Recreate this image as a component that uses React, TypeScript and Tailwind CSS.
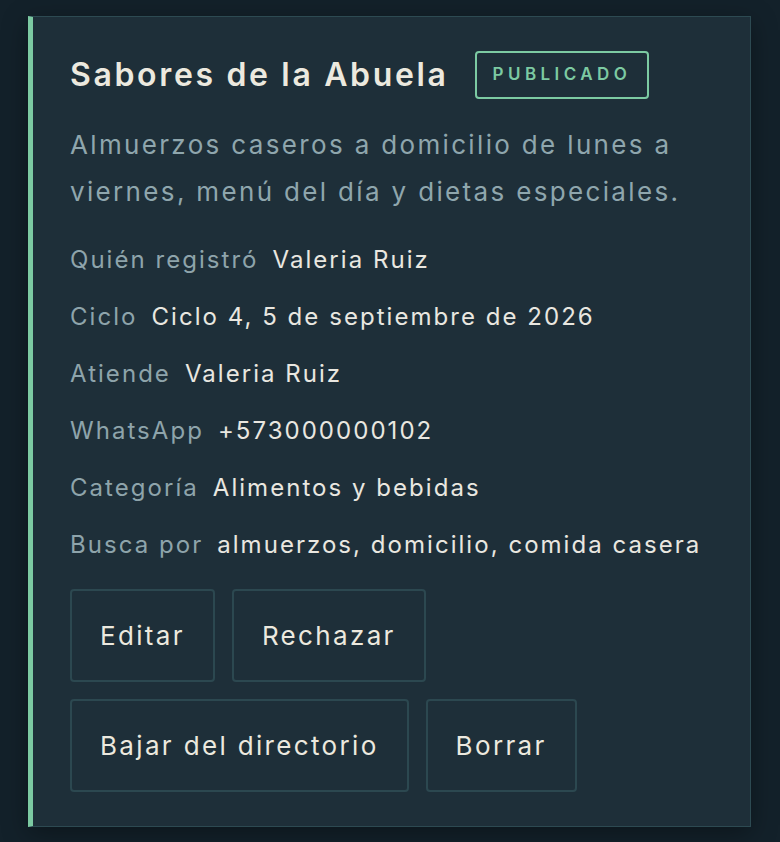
import React from 'react';

const rows: [string, string][] = [
    ['Quién registró', 'Valeria Ruiz'],
    ['Ciclo', 'Ciclo 4, 5 de septiembre de 2026'],
    ['Atiende', 'Valeria Ruiz'],
    ['WhatsApp', '+573000000102'],
    ['Categoría', 'Alimentos y bebidas'],
    ['Busca por', 'almuerzos, domicilio, comida casera'],
];

const actions = ['Editar', 'Rechazar', 'Bajar del directorio', 'Borrar'];

export default function App() {
    return (
        <div
            className="min-h-[842px] w-full bg-[#13212a] pt-[16px] pl-[28px] pr-[29px] pb-[16px]"
            style={{ fontFamily: 'Inter, "Noto Sans", sans-serif' }}
        >
            <div className="border border-[#2d4a52] border-l-[5px] border-l-[#7ccaa2] bg-[#1e2f39] pt-[34px] pl-[37px] pr-[36px] pb-[34px] shadow-[0_6px_24px_rgba(0,0,0,0.35)]">
                {/* Header */}
                <div className="flex items-center gap-[26px]">
                    <h1 className="text-[32px] font-semibold tracking-[0.083em] text-[#ece9df] leading-none">
                        Sabores de la Abuela
                    </h1>
                    <span className="flex h-[48px] items-center rounded-[4px] border-2 border-[#7ccaa2] px-[16px] text-[17px] font-semibold tracking-[0.26em] text-[#7ccaa2]">
                        PUBLICADO
                    </span>
                </div>

                <p className="mt-[22px] text-[26px] leading-[47px] tracking-[0.09em] text-[#8fa6ad]">
                    Almuerzos caseros a domicilio de lunes a viernes, menú del día y dietas especiales.
                </p>

                <div className="mt-[16px] flex flex-col">
                    {rows.map(([label, value]) => (
                        <div key={label} className="flex h-[57px] items-center gap-[14px] text-[24px] tracking-[0.085em]">
                            <span className="text-[#8ea4ab]">{label}</span>
                            <span className="text-[#e9e7e0]">{value}</span>
                        </div>
                    ))}
                </div>

                <div className="mt-[16px] flex flex-wrap gap-[17px]">
                    {actions.map(a => (
                        <button
                            key={a}
                            className="h-[93px] rounded-[4px] border-2 border-[#2c4850] px-[28px] text-[26px] tracking-[0.09em] text-[#ece9df]"
                        >
                            {a}
                        </button>
                    ))}
                </div>
            </div>
        </div>
    );
}
